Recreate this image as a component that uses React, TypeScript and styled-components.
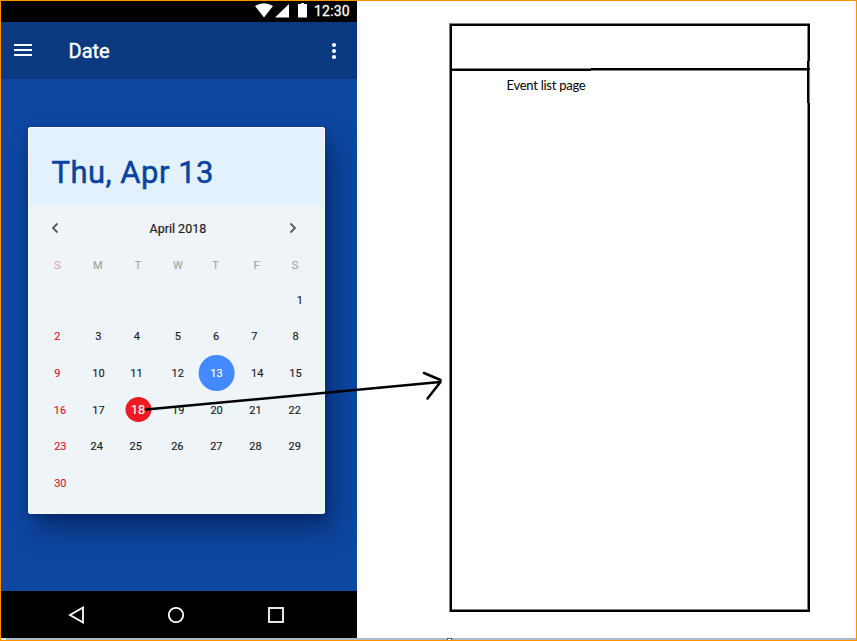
import React from "react";
import styled, { createGlobalStyle } from "styled-components";

const GlobalStyle = createGlobalStyle`
  *, *::before, *::after { box-sizing: border-box; }
  body { margin: 0; background: #fff; }
`;

const Board = styled.main`
  position: relative;
  width: 857px;
  height: 641px;
  display: grid;
  grid-template-rows: 1fr 2px;
  border: 1px solid #ff9100;
  background: #fff;
  overflow: hidden;
  font-family: Roboto, sans-serif;
`;

const Panels = styled.div`
  display: flex;
  align-items: flex-start;
`;

const BottomEdge = styled.div`
  display: flex;
  padding-left: 446px;
  background: linear-gradient(to right, #dfe6ee 5px, #a9b8cb 5px);
`;

const Handle = styled.span`
  width: 5px;
  height: 2px;
  border: 1px solid #555;
  border-bottom: 0;
  background: #fff;
`;

const Phone = styled.section`
  width: 356px;
  height: 637px;
  flex: none;
  display: flex;
  flex-direction: column;
  background: #0d47a1;
`;

const StatusBar = styled.div`
  height: 21px;
  display: flex;
  align-items: flex-start;
  background: #000;
  color: #fff;
`;

const StatusIcons = styled.svg`
  width: 53px;
  height: 18px;
  margin-left: 254px;
  flex: none;
`;

const Clock = styled.span`
  margin-left: 6px;
  font-size: 14px;
  font-weight: 400;
  -webkit-text-stroke: 0.3px currentColor;
  line-height: 20px;
  letter-spacing: 0.2px;
`;

const AppBar = styled.header`
  height: 57px;
  display: flex;
  align-items: center;
  padding: 0 18px 0 13px;
  background: #0b397f;
  color: #fff;
`;

const MenuIcon = styled.svg`
  width: 18px;
  height: 14px;
  margin-bottom: 2px;
`;

const Title = styled.h1`
  flex: 1;
  margin: 0 0 0 36.5px;
  font-size: 20px;
  font-weight: 400;
  -webkit-text-stroke: 0.4px currentColor;
  line-height: 24px;
`;

const MoreIcon = styled.svg`
  width: 10px;
  height: 18px;
`;

const Body = styled.div`
  flex: 1;
  padding: 48px 0 0 27.4px;
  overflow: hidden;
`;

const Card = styled.article`
  width: 297px;
  height: 387.4px;
  border: 1px solid #f8fbfe;
  border-radius: 2px;
  overflow: hidden;
  background: #eff4f9;
  box-shadow: 8px 16px 26px rgba(0, 10, 45, 0.42), 0 2px 7px rgba(0, 10, 45, 0.22);
`;

const CardHead = styled.div`
  height: 77px;
  padding: 25.5px 0 0 22px;
  background: #e3f1fd;
  color: #0a42a0;
  font-size: 31px;
  font-weight: 400;
  -webkit-text-stroke: 0.5px currentColor;
  line-height: 38px;
  letter-spacing: 0.5px;
  white-space: nowrap;
`;

const MonthBar = styled.div`
  height: 48px;
  display: flex;
  align-items: center;
  padding: 0 27px 2px 22px;
  color: #212121;
  font-size: 12.5px;
  font-weight: 400;
  -webkit-text-stroke: 0.2px currentColor;
`;

const MonthName = styled.span`
  flex: 1;
  padding-left: 7px;
  text-align: center;
`;

const Chevron = styled.svg`
  width: 8px;
  height: 12px;
  fill: none;
  stroke: #555a60;
  stroke-width: 1.8;
`;

const Week = styled.div<{ $height: number }>`
  display: grid;
  grid-template-columns: repeat(7, 39.67px);
  height: ${(p) => p.$height}px;
  margin-left: 8px;
  align-items: center;
`;

type Tone = "normal" | "sunday" | "label" | "sundayLabel" | "inverse";
const tones: Record<Tone, string> = {
  normal: "#202124",
  sunday: "#d3202b",
  label: "#a0a4a9",
  sundayLabel: "#dfa3aa",
  inverse: "#fff",
};

const Cell = styled.span<{ $tone: Tone; $shift: number }>`
  display: flex;
  justify-content: center;
  align-items: center;
  height: 20px;
  transform: translateX(${(p) => p.$shift}px);
  color: ${(p) => tones[p.$tone]};
  font-size: 11px;
  font-weight: 400;
  -webkit-text-stroke: 0.15px currentColor;
`;

const Disc = styled.span<{ $size: number; $height: number; $color: string; $font: number }>`
  width: ${(p) => p.$size}px;
  height: ${(p) => p.$height}px;
  flex: none;
  display: flex;
  align-items: center;
  justify-content: center;
  margin-bottom: 1px;
  border-radius: 50%;
  background: ${(p) => p.$color};
  font-size: ${(p) => p.$font}px;
`;

const NavBar = styled.nav`
  height: 47px;
  display: flex;
  align-items: center;
  gap: 82px;
  padding-left: 66px;
  background: #000;
`;

const NavIcon = styled.svg`
  width: 18px;
  height: 18px;
  fill: none;
  stroke: #fff;
  stroke-width: 1.8;
`;

const Sketch = styled.section`
  position: relative;
  width: 361px;
  height: 589px;
  margin: 22px 0 0 92px;
  padding: 53px 0 0 57.5px;
`;

const SketchLines = styled.svg`
  position: absolute;
  inset: 0;
  width: 362px;
  height: 589px;
  overflow: visible;
`;

const SketchLabel = styled.p`
  margin: 0;
  color: #000;
  font-family: Lato, "Open Sans", sans-serif;
  font-size: 13px;
  line-height: 18px;
  letter-spacing: -0.26px;
`;

const Arrow = styled.svg`
  position: absolute;
  left: -1px;
  top: -1px;
  width: 857px;
  height: 641px;
  pointer-events: none;
`;

type Day = [text: string, center: number];
const FIRST_CENTER = 57.2;
const COLUMN = 39.67;

const labels: Day[] = [["S", 57.5], ["M", 97.7], ["T", 138], ["W", 178], ["T", 215.5], ["F", 256.7], ["S", 295.2]];
const weeks: { height: number; days: Day[] }[] = [
  { height: 36, days: [["", 57], ["", 97], ["", 137], ["", 177], ["", 216], ["", 256], ["1", 299.8]] },
  { height: 37, days: [["2", 57.3], ["3", 98.3], ["4", 136.8], ["5", 177.8], ["6", 216.1], ["7", 254.5], ["8", 295.6]] },
  { height: 37, days: [["9", 57.3], ["10", 98.5], ["11", 136.5], ["12", 177.7], ["13", 216.5], ["14", 257.2], ["15", 295.6]] },
  { height: 36, days: [["16", 60], ["17", 98.5], ["18", 138], ["19", 178.3], ["20", 216.6], ["21", 255.5], ["22", 294.7]] },
  { height: 37, days: [["23", 60.3], ["24", 96.7], ["25", 135.8], ["26", 177.4], ["27", 216.4], ["28", 255.6], ["29", 294.8]] },
  { height: 37, days: [["30", 60.3]] },
];

const shiftOf = (center: number, column: number) => center - FIRST_CENTER - column * COLUMN;

function DayCell({ day, column }: { day: Day; column: number }) {
  const [text, center] = day;
  const selected = text === "13";
  const event = text === "18";
  const tone: Tone = selected || event ? "inverse" : column === 0 ? "sunday" : "normal";
  return (
    <Cell $tone={tone} $shift={shiftOf(center, column)}>
      {selected && <Disc $size={36} $height={36} $color="#4489fd" $font={11}>{text}</Disc>}
      {event && <Disc $size={26} $height={25} $color="#ed1c24" $font={12.5}>{text}</Disc>}
      {!selected && !event && text}
    </Cell>
  );
}

export default function App() {
  return (
    <>
      <GlobalStyle />
      <Board>
        <Panels>
          <Phone>
            <StatusBar>
              <StatusIcons viewBox="0 0 53 18" fill="#fff">
                <path d="M0 5Q9 -.5 18 5L9 16.5Z" />
                <path d="M20 16.5L34 3V16.5Z" />
                <path d="M43 3H46V2H49V3H52V16.5H43Z" />
              </StatusIcons>
              <Clock>12:30</Clock>
            </StatusBar>
            <AppBar>
              <MenuIcon viewBox="0 0 18 14" fill="#fff">
                <path d="M0 1H18V3H0ZM0 6H18V8H0ZM0 11H18V13H0Z" />
              </MenuIcon>
              <Title>Date</Title>
              <MoreIcon viewBox="0 0 10 18" fill="#fff">
                <circle cx="5" cy="3" r="2.1" />
                <circle cx="5" cy="9" r="2.1" />
                <circle cx="5" cy="15" r="2.1" />
              </MoreIcon>
            </AppBar>
            <Body>
              <Card>
                <CardHead>Thu, Apr 13</CardHead>
                <MonthBar>
                  <Chevron viewBox="0 0 8 12"><path d="M6.5 1.5L2 6L6.5 10.5" /></Chevron>
                  <MonthName>April 2018</MonthName>
                  <Chevron viewBox="0 0 8 12"><path d="M1.5 1.5L6 6L1.5 10.5" /></Chevron>
                </MonthBar>
                <Week $height={24}>
                  {labels.map(([text, center], i) => (
                    <Cell key={i} $tone={i === 0 ? "sundayLabel" : "label"} $shift={shiftOf(center, i)}>{text}</Cell>
                  ))}
                </Week>
                <Week $height={5} />
                {weeks.map((week, row) => (
                  <Week key={row} $height={week.height}>
                    {week.days.map((day, i) => <DayCell key={i} day={day} column={i} />)}
                  </Week>
                ))}
              </Card>
            </Body>
            <NavBar>
              <NavIcon viewBox="0 0 18 18"><path d="M16 1.5V16.5L3 9Z" /></NavIcon>
              <NavIcon viewBox="0 0 18 18"><circle cx="9" cy="9" r="7.2" /></NavIcon>
              <NavIcon viewBox="0 0 18 18"><rect x="2" y="2" width="14" height="14" /></NavIcon>
            </NavBar>
          </Phone>
          <Sketch>
            <SketchLines viewBox="0 0 362 589">
              <path fill="#808080" d="M0 0H361V1H1V589H0ZM3 45H142V46H3ZM142 47H361V48H142ZM358 3H359V38H358ZM360 38H361V80H360ZM358 80H359V587H358ZM3 586H359V587H3Z" />
              <path fill="#000" d="M1 1H361V3H3V589H1ZM3 46H142V48H3ZM142 45H361V47H142ZM359 3H361V38H359ZM358 38H360V80H358ZM359 80H361V589H359ZM3 587H361V589H3Z" />
            </SketchLines>
            <SketchLabel>Event list page</SketchLabel>
          </Sketch>
        </Panels>
        <BottomEdge><Handle /></BottomEdge>
        <Arrow viewBox="0 0 857 641" fill="none" stroke="#000" strokeWidth="2.5" strokeLinecap="round">
          <path d="M146 409.5L440 382M424 373L440.5 380M440.5 382L427.5 398.5" />
        </Arrow>
      </Board>
    </>
  );
}
